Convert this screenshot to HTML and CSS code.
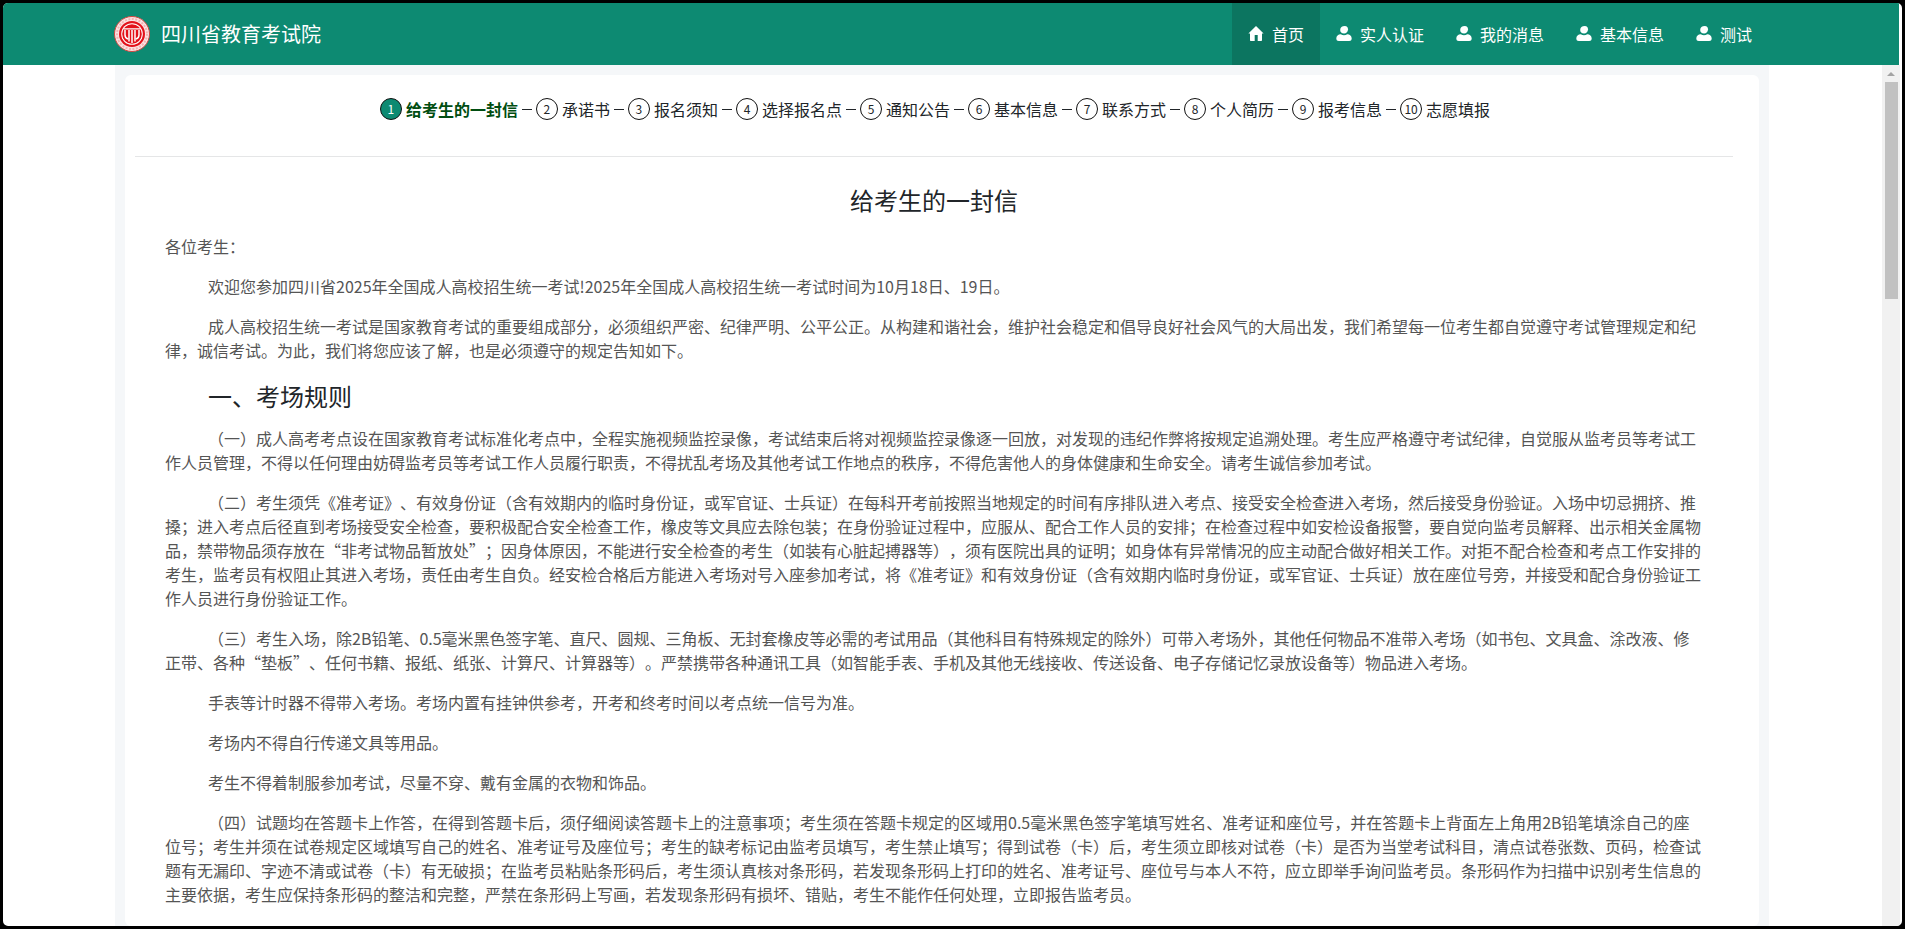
FILE: index.html
```html
<!DOCTYPE html>
<html lang="zh-CN">
<head>
<meta charset="utf-8">
<title>四川省教育考试院</title>
<link rel="stylesheet" href="styles.css">
</head>
<body>
<svg class="defs" aria-hidden="true">
  <symbol id="user" viewBox="0 0 16 16">
    <path d="M8.800 0C11 0 12 1.400 12 3.300 12 5.600 10.400 7.600 8 7.600S4.200 6 4.200 4C4.200 1.600 6 0 8.800 0z"/>
    <path d="M.3 12.500C.3 10 2.200 8.300 4.800 8.300 5.700 9 6.800 9.300 8 9.300s2.300-.3 3.200-1c2.600 0 4.500 1.700 4.500 4.200 0 1.700-1 2.500-2.500 2.500H2.800C1.300 15 .3 14.200.3 12.500z"/>
  </symbol>
  <symbol id="home" viewBox="0 0 16 16">
    <path d="M8 0 15.600 7.500H14V14c0 .7-.4 1-1 1H9.700V9H6.700v6H3c-.6 0-1-.3-1-1V7.500H.4z"/>
  </symbol>
</svg>
<div class="window">
  <header class="header">
    <div class="header-inner">
      <a class="brand" href="#">
        <svg class="logo" viewBox="0 0 36 36" aria-hidden="true">
          <circle cx="18" cy="18" r="17.500" fill="#fbe3e3" stroke="#d8443f"/>
          <circle cx="18" cy="18" r="15" fill="none" stroke="#f3b4b4" stroke-width="2" stroke-dasharray="2 1.500"/>
          <circle cx="18" cy="18" r="13" fill="#e3121b"/>
          <circle cx="18" cy="18" r="10.800" fill="#fff"/>
          <circle cx="18" cy="18" r="9.800" fill="#e3121b"/>
          <path d="M9.500 12.800h17" stroke="#fff" stroke-width="1.200"/>
          <path d="M11 14v5q0 3 3 4M15 14v11.500M21 14v11.500M25 14v5q0 3-3 4M18 14v13" fill="none" stroke="#fff" stroke-width="1.500"/>
        </svg>
        <span>四川省教育考试院</span>
      </a>
      <nav class="nav">
        <a class="nav-item active" href="#"><svg class="icon"><use href="#home"/></svg>首页</a>
        <a class="nav-item" href="#"><svg class="icon"><use href="#user"/></svg>实人认证</a>
        <a class="nav-item" href="#"><svg class="icon"><use href="#user"/></svg>我的消息</a>
        <a class="nav-item" href="#"><svg class="icon"><use href="#user"/></svg>基本信息</a>
        <a class="nav-item" href="#"><svg class="icon"><use href="#user"/></svg>测试</a>
      </nav>
    </div>
  </header>
  <div class="viewport">
    <main class="panel">
      <div class="card">
        <ol class="steps">
          <li class="step current"><span class="num">1</span>给考生的一封信</li>
          <li class="step"><span class="num">2</span>承诺书</li>
          <li class="step"><span class="num">3</span>报名须知</li>
          <li class="step"><span class="num">4</span>选择报名点</li>
          <li class="step"><span class="num">5</span>通知公告</li>
          <li class="step"><span class="num">6</span>基本信息</li>
          <li class="step"><span class="num">7</span>联系方式</li>
          <li class="step"><span class="num">8</span>个人简历</li>
          <li class="step"><span class="num">9</span>报考信息</li>
          <li class="step"><span class="num">10</span>志愿填报</li>
        </ol>
        <article class="letter">
          <h1>给考生的一封信</h1>
          <p class="greeting">各位考生：</p>
          <p>欢迎您参加四川省2025年全国成人高校招生统一考试!2025年全国成人高校招生统一考试时间为10月18日、19日。</p>
          <p>成人高校招生统一考试是国家教育考试的重要组成部分，必须组织严密、纪律严明、公平公正。从构建和谐社会，维护社会稳定和倡导良好社会风气的大局出发，我们希望每一位考生都自觉遵守考试管理规定和纪律，诚信考试。为此，我们将您应该了解，也是必须遵守的规定告知如下。</p>
          <h2>一、考场规则</h2>
          <p>（一）成人高考考点设在国家教育考试标准化考点中，全程实施视频监控录像，考试结束后将对视频监控录像逐一回放，对发现的违纪作弊将按规定追溯处理。考生应严格遵守考试纪律，自觉服从监考员等考试工作人员管理，不得以任何理由妨碍监考员等考试工作人员履行职责，不得扰乱考场及其他考试工作地点的秩序，不得危害他人的身体健康和生命安全。请考生诚信参加考试。</p>
          <p>（二）考生须凭《准考证》、有效身份证（含有效期内的临时身份证，或军官证、士兵证）在每科开考前按照当地规定的时间有序排队进入考点、接受安全检查进入考场，然后接受身份验证。入场中切忌拥挤、推搡；进入考点后径直到考场接受安全检查，要积极配合安全检查工作，橡皮等文具应去除包装；在身份验证过程中，应服从、配合工作人员的安排；在检查过程中如安检设备报警，要自觉向监考员解释、出示相关金属物品，禁带物品须存放在“非考试物品暂放处”；因身体原因，不能进行安全检查的考生（如装有心脏起搏器等），须有医院出具的证明；如身体有异常情况的应主动配合做好相关工作。对拒不配合检查和考点工作安排的考生，监考员有权阻止其进入考场，责任由考生自负。经安检合格后方能进入考场对号入座参加考试，将《准考证》和有效身份证（含有效期内临时身份证，或军官证、士兵证）放在座位号旁，并接受和配合身份验证工作人员进行身份验证工作。</p>
          <p>（三）考生入场，除2B铅笔、0.5毫米黑色签字笔、直尺、圆规、三角板、无封套橡皮等必需的考试用品（其他科目有特殊规定的除外）可带入考场外，其他任何物品不准带入考场（如书包、文具盒、涂改液、修正带、各种“垫板”、任何书籍、报纸、纸张、计算尺、计算器等）。严禁携带各种通讯工具（如智能手表、手机及其他无线接收、传送设备、电子存储记忆录放设备等）物品进入考场。</p>
          <p>手表等计时器不得带入考场。考场内置有挂钟供参考，开考和终考时间以考点统一信号为准。</p>
          <p>考场内不得自行传递文具等用品。</p>
          <p>考生不得着制服参加考试，尽量不穿、戴有金属的衣物和饰品。</p>
          <p>（四）试题均在答题卡上作答，在得到答题卡后，须仔细阅读答题卡上的注意事项；考生须在答题卡规定的区域用0.5毫米黑色签字笔填写姓名、准考证和座位号，并在答题卡上背面左上角用2B铅笔填涂自己的座位号；考生并须在试卷规定区域填写自己的姓名、准考证号及座位号；考生的缺考标记由监考员填写，考生禁止填写；得到试卷（卡）后，考生须立即核对试卷（卡）是否为当堂考试科目，清点试卷张数、页码，检查试题有无漏印、字迹不清或试卷（卡）有无破损；在监考员粘贴条形码后，考生须认真核对条形码，若发现条形码上打印的姓名、准考证号、座位号与本人不符，应立即举手询问监考员。条形码作为扫描中识别考生信息的主要依据，考生应保持条形码的整洁和完整，严禁在条形码上写画，若发现条形码有损坏、错贴，考生不能作任何处理，立即报告监考员。</p>
        </article>
      </div>
    </main>
    <div class="scrollbar" aria-hidden="true">
      <span class="arrow"></span>
      <span class="thumb"></span>
    </div>
  </div>
</div>
</body>
</html>
```
FILE: styles.css
```css
* { box-sizing: border-box; }

body {
  margin: 0;
  background: #000;
  color: #212529;
  font-family: "Noto Sans CJK SC", "Noto Sans", sans-serif;
  font-size: 16px;
  line-height: 24px;
  text-spacing-trim: space-all;
  text-autospace: no-autospace;
}

a { color: inherit; text-decoration: none; }

.defs { position: absolute; width: 0; height: 0; }

.window {
  display: flex;
  flex-direction: column;
  height: 100vh;
  border: 3px solid #000;
  border-radius: 8px;
  background: #fff;
  overflow: hidden;
}

.header {
  flex: none;
  margin-right: 3px;
  background: #0d8a72;
  color: #fff;
}

.header-inner {
  display: flex;
  align-items: stretch;
  justify-content: space-between;
  height: 62px;
  padding: 0 131px 0 111px;
}

.brand {
  display: flex;
  align-items: center;
  gap: 11px;
  font-size: 20px;
}

.logo { width: 36px; height: 36px; }

.nav { display: flex; }

.nav-item {
  display: flex;
  align-items: center;
  gap: 8px;
  padding: 0 16px;
}

.nav-item.active { background: #0c7560; }

.icon { width: 16px; height: 16px; fill: #fff; }

.viewport {
  display: flex;
  flex: 1;
  min-height: 0;
}

.panel {
  flex: 1;
  margin: 0 113px 0 112px;
  padding: 10px 10px 0;
  background: #f5f7f9;
  overflow: hidden;
}

.card {
  min-height: 100%;
  padding: 0 26px 0 10px;
  border-radius: 6px;
  background: #fff;
}

.steps {
  display: flex;
  justify-content: center;
  margin: 0;
  padding: 22px 0 35px 2px;
  border-bottom: 1px solid #e5e6e7;
  list-style: none;
}

.step {
  display: flex;
  align-items: center;
  gap: 4px;
  white-space: nowrap;
}

.step:not(:last-child)::after {
  content: "";
  width: 10px;
  margin-right: 4px;
  border-top: 1px solid #212529;
}

.num {
  display: flex;
  align-items: center;
  justify-content: center;
  width: 22px;
  height: 22px;
  border: 1px solid #111;
  border-radius: 50%;
  font-size: 12px;
}

.current { color: #004d11; font-weight: 700; }

.current .num { background: #0d8a72; color: #fff; font-weight: 400; }

.letter {
  padding: 27px 30px 0;
  color: #555;
}

.letter p {
  margin: 0 0 16px;
  text-indent: 43px;
}

.letter .greeting { text-indent: 0; }

.letter h1,
.letter h2 {
  margin: 0 0 16px;
  color: #212529;
  font-size: 24px;
  font-weight: 400;
  line-height: 32px;
}

.letter h1 { margin-bottom: 18px; }

.letter h1 { text-align: center; }

.letter h2 {
  margin-top: 19px;
  line-height: 29px;
  text-indent: 43px;
}

.scrollbar {
  display: flex;
  flex-direction: column;
  align-items: center;
  width: 18px;
  margin-right: 2px;
  background: #f1f1f1;
}

.arrow {
  margin: 7px 0 6px;
  border: 4px solid transparent;
  border-top: 0;
  border-bottom-color: #a3a3a3;
}

.thumb {
  width: 13px;
  height: 217px;
  background: #c1c1c1;
}
```
